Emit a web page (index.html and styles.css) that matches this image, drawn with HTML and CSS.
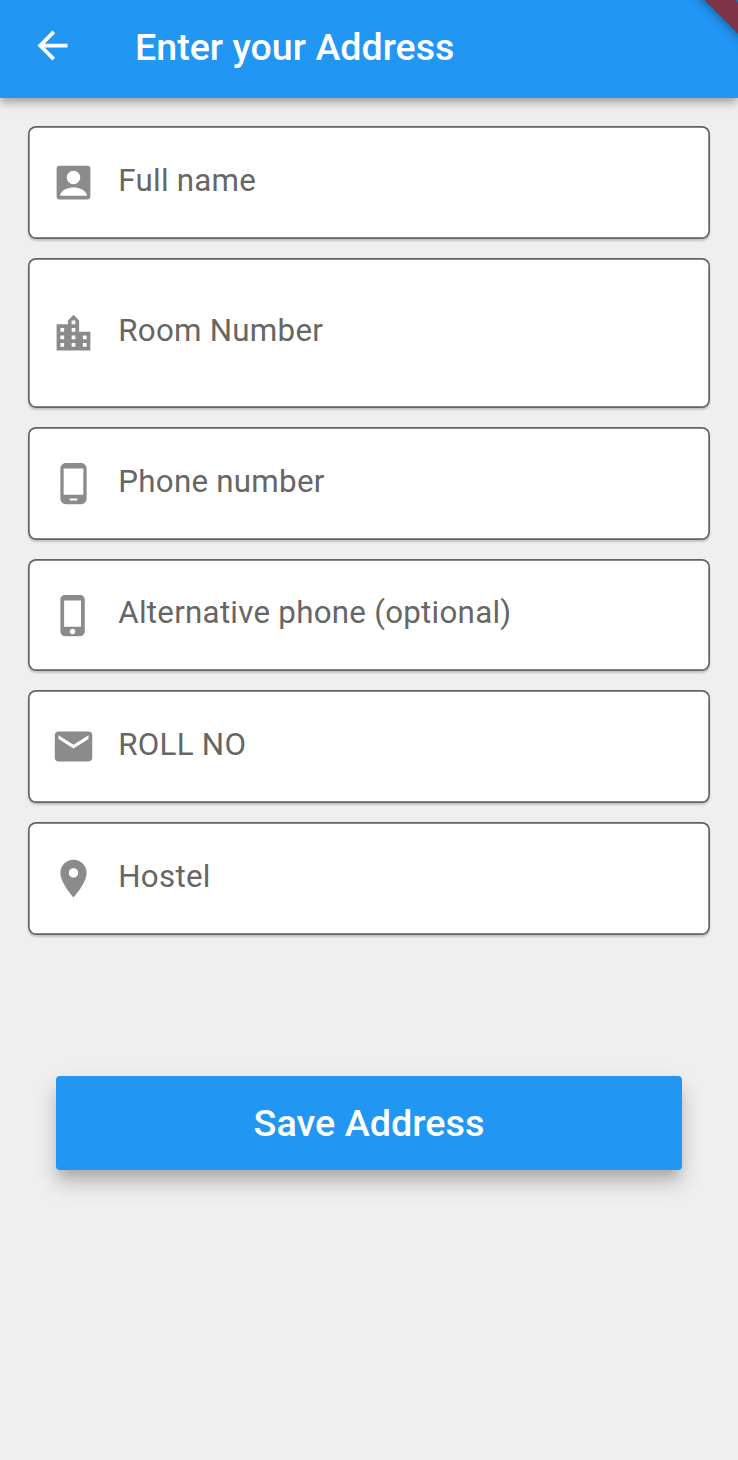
FILE: index.html
```html
<!DOCTYPE html>
<html lang="en">
<head>
<meta charset="utf-8">
<title>Enter your Address</title>
<link rel="stylesheet" href="styles.css">
</head>
<body>
<header class="app-bar">
  <svg class="icon back" viewBox="0 0 24 24"><path d="M20 11H7.830l5.590-5.590L12 4l-8 8 8 8 1.410-1.410L7.830 13H20v-2z"/></svg>
  <h1 class="title">Enter your Address</h1>
  <div class="corner"><div class="ribbon"></div></div>
</header>
<main class="form">
  <label class="field">
    <svg class="icon" viewBox="0 0 24 24"><path fill-rule="evenodd" d="M4.500 3h15A1.500 1.500 0 0 1 21 4.500v15a1.500 1.500 0 0 1-1.500 1.500h-15A1.500 1.500 0 0 1 3 19.500v-15A1.500 1.500 0 0 1 4.500 3zm7.500 2.700a3.600 3.600 0 1 0 0 7.200 3.600 3.600 0 0 0 0-7.200zM4.900 19.100h14.200v-.6c-1-2.500-4-3.800-7.100-3.800s-6.100 1.300-7.100 3.800z"/></svg>
    <span class="label">Full name</span>
  </label>
  <label class="field tall">
    <svg class="icon" viewBox="0 0 24 24"><path d="M15 11V5l-3-3-3 3v2H3v14h18V11h-6zm-8 8H5v-2h2v2zm0-4H5v-2h2v2zm0-4H5V9h2v2zm6 8h-2v-2h2v2zm0-4h-2v-2h2v2zm0-4h-2V9h2v2zm0-4h-2V5h2v2zm6 12h-2v-2h2v2zm0-4h-2v-2h2v2z"/></svg>
    <span class="label">Room Number</span>
  </label>
  <label class="field">
    <svg class="icon" viewBox="0 0 24 24"><path d="M16 1H8C6.340 1 5 2.340 5 4v16c0 1.660 1.340 3 3 3h8c1.660 0 3-1.340 3-3V4c0-1.660-1.340-3-3-3zm-2 20h-4v-1h4v1zm3.250-3H6.750V4h10.500v14z"/></svg>
    <span class="label">Phone number</span>
  </label>
  <label class="field short">
    <svg class="icon" viewBox="0 0 24 24"><path d="M15.500 1h-8C6.120 1 5 2.120 5 3.500v17C5 21.880 6.120 23 7.500 23h8c1.380 0 2.500-1.120 2.500-2.500v-17C18 2.120 16.880 1 15.500 1zm-4 21c-.83 0-1.500-.67-1.500-1.500s.67-1.500 1.500-1.500 1.500.67 1.500 1.500-.67 1.500-1.500 1.500zm4.500-4H7V4h9v14z"/></svg>
    <span class="label">Alternative phone (optional)</span>
  </label>
  <label class="field">
    <svg class="icon" viewBox="0 0 24 24"><path d="M20 4H4c-1.100 0-1.990.9-1.990 2L2 18c0 1.100.9 2 2 2h16c1.100 0 2-.9 2-2V6c0-1.100-.9-2-2-2zm0 4l-8 5-8-5V6l8 5 8-5v2z"/></svg>
    <span class="label">ROLL NO</span>
  </label>
  <label class="field">
    <svg class="icon" viewBox="0 0 24 24"><path d="M12 2C8.130 2 5 5.130 5 9c0 5.250 7 13 7 13s7-7.750 7-13c0-3.870-3.130-7-7-7zm0 9.500c-1.380 0-2.500-1.120-2.500-2.500s1.120-2.500 2.500-2.500 2.500 1.120 2.500 2.500-1.120 2.500-2.500 2.500z"/></svg>
    <span class="label">Hostel</span>
  </label>
  <button class="save" type="button">Save Address</button>
</main>
</body>
</html>
```
FILE: styles.css
```css
* { box-sizing: border-box; }
body {
  margin: 0;
  min-height: 1460px;
  background: #efefef;
  font-family: Roboto, "Liberation Sans", sans-serif;
}
.icon { width: 45px; height: 45px; flex: none; fill: #8b8b8b; }
.app-bar {
  position: relative;
  display: flex;
  align-items: center;
  height: 98px;
  padding: 0 30px 4px;
  background: #2196f3;
  box-shadow: 0 4px 7px -1px rgba(0,0,0,.22), 0 7px 10px rgba(0,0,0,.1), 0 2px 14px rgba(0,0,0,.07);
}
.back { fill: #fff; margin-top: -4px; }
.title {
  margin: -1px 0 0 60px;
  color: #fff;
  font-size: 37.600px;
  font-weight: 500;
  line-height: 44px;
  white-space: nowrap;
}
.corner {
  position: absolute;
  top: 0;
  right: 0;
  width: 64px;
  height: 60px;
  overflow: hidden;
}
.ribbon {
  position: absolute;
  top: -2.500px;
  left: -5px;
  width: 120px;
  height: 22px;
  background: #7f3348;
  box-shadow: 0 0 11px rgba(0,0,0,.5);
  transform: rotate(45deg);
}
.form {
  display: flex;
  flex-direction: column;
  gap: 19px;
  padding: 28px 28px 0;
}
.field {
  display: flex;
  align-items: center;
  height: 113px;
  padding-left: 22.700px;
  border-radius: 8px;
  background: #fff;
  box-shadow: inset 0 0 0 1.700px #636363, 0 2px 2px rgba(0,0,0,.18);
}
.tall { height: 150px; }
.short { height: 112px; }
.label {
  margin: -4px 0 0 22.600px;
  color: #666;
  font-size: 31.300px;
  line-height: 36px;
  letter-spacing: .26px;
  white-space: nowrap;
}
.save {
  height: 94px;
  margin: 122px 28px 0;
  padding: 0;
  border: 0;
  border-radius: 4px;
  background: #2196f3;
  color: #fff;
  font: 500 37.800px/44px Roboto, "Liberation Sans", sans-serif;
  box-shadow: 0 10px 11px -5px rgba(0,0,0,.16), 0 15px 20px 1px rgba(0,0,0,.13), 0 6px 24px 2px rgba(0,0,0,.06);
}
```
